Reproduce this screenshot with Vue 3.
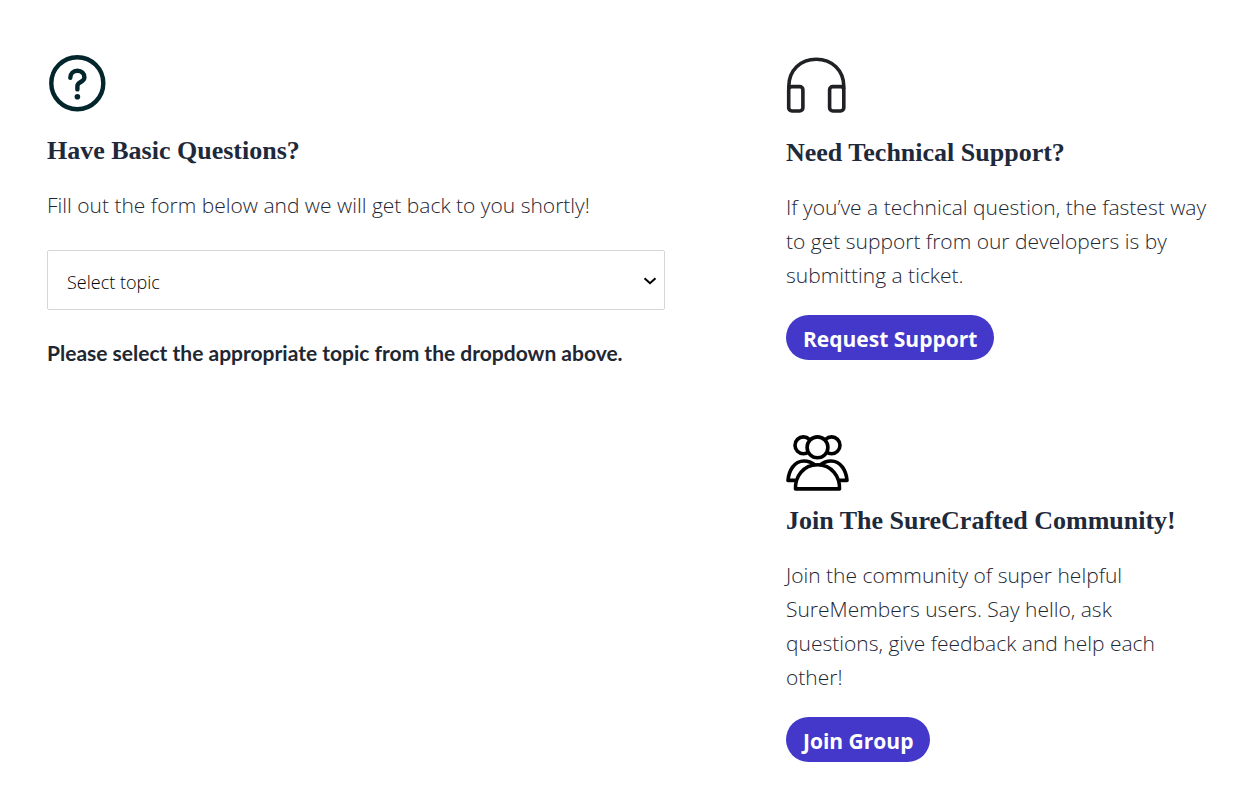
<script setup>
import { ref } from 'vue'

const topic = ref('')
const topics = ['Pre-sale question', 'Billing', 'Partnership', 'Other']
</script>

<template>
  <main class="contact">
    <section class="questions">
      <svg class="icon" width="60" height="60" viewBox="0 0 60 60" fill="none" stroke="#02262b" stroke-linecap="round" stroke-linejoin="round" aria-hidden="true">
        <circle cx="30.3" cy="30.2" r="26" stroke-width="4.4" />
        <path d="M23.3 24.8C23.3 20.6 26.1 17.8 30.4 17.8C34.7 17.8 37.4 20.6 37.4 24.5C37.4 29.4 30.4 28.6 30.4 33V36.4" stroke-width="4.4" />
        <circle cx="30.4" cy="43.7" r="2.8" fill="#02262b" stroke="none" />
      </svg>
      <h2>Have Basic Questions?</h2>
      <p>Fill out the form below and we will get back to you shortly!</p>
      <div class="field">
        <select v-model="topic" aria-label="Select topic">
          <option value="">Select topic</option>
          <option v-for="item in topics" :key="item" :value="item">{{ item }}</option>
        </select>
        <svg class="chevron" width="14" height="8" viewBox="0 0 14 8" fill="none" stroke="#000" stroke-width="2" aria-hidden="true">
          <path d="M1.5 1.2L7 6.2L12.5 1.2" />
        </svg>
      </div>
      <p class="hint">Please select the appropriate topic from the dropdown above.</p>
    </section>

    <div class="side">
      <section>
        <svg class="icon" width="60" height="60" viewBox="0 0 60 60" fill="none" stroke="#202124" stroke-width="3.6" aria-hidden="true">
          <path d="M2.8 34V31.5C2.8 15.2 14.5 4.2 30.2 4.2S57.8 15.2 57.8 31.5V34" />
          <rect x="2.7" y="31.6" width="14.2" height="24.4" rx="3.2" />
          <rect x="43.6" y="31.6" width="14.2" height="24.4" rx="3.2" />
        </svg>
        <h2>Need Technical Support?</h2>
        <p>If you’ve a technical question, the fastest way to get support from our developers is by submitting a ticket.</p>
        <a class="button" href="#support">Request Support</a>
      </section>

      <section>
        <svg class="icon group" width="64" height="60" viewBox="0 0 64 60" fill="none" stroke="#000" stroke-width="3.6" stroke-linejoin="round" aria-hidden="true">
          <circle cx="17.4" cy="12.3" r="8.4" />
          <circle cx="45.6" cy="12.3" r="8.4" />
          <path d="M9.5 47.4H2C2.8 38 8 28 18 28C22.5 28 26 29.6 29 32" />
          <path d="M53.5 47.4H61C60.2 38 55 28 45 28C40.5 28 37 29.6 34 32" />
          <circle cx="31.5" cy="14.3" r="10.4" fill="#fff" />
          <path d="M9.5 55.9C9 44 17 31.7 31.5 31.7S54 44 53.5 55.9Z" fill="#fff" />
        </svg>
        <h2>Join The SureCrafted Community!</h2>
        <p>Join the community of super helpful SureMembers users. Say hello, ask questions, give feedback and help each other!</p>
        <a class="button" href="#group">Join Group</a>
      </section>
    </div>
  </main>
</template>

<style>
body {
  margin: 0;
  background: #fff;
}
</style>

<style scoped>
.contact {
  display: grid;
  grid-template-columns: 618fr 426fr;
  column-gap: 121px;
  align-items: start;
  padding: 53px 29px 38px 47px;
  color: #1f2733;
  font-family: "Open Sans", "Noto Sans", sans-serif;
  font-size: 21px;
  line-height: 34px;
}

.icon {
  display: block;
  margin-bottom: 22px;
}

.icon.group {
  margin-bottom: 12px;
}

h2 {
  margin: 0 0 21px;
  color: #1e293b;
  font-family: "Liberation Serif", serif;
  font-size: 26px;
  font-weight: 700;
  line-height: 32px;
}

p {
  margin: 0;
  font-weight: 300;
}

.field {
  position: relative;
  margin: 28px 0 26px;
}

select {
  display: block;
  appearance: none;
  box-sizing: border-box;
  width: 100%;
  height: 60px;
  padding: 3px 40px 0 19px;
  border: 1px solid #d5d6d8;
  border-radius: 2px;
  background: #fff;
  color: #000;
  font-family: inherit;
  font-size: 18px;
  font-weight: 300;
}

.chevron {
  position: absolute;
  top: 27px;
  right: 8px;
  pointer-events: none;
}

.hint {
  font-family: Lato, "Open Sans", sans-serif;
  font-weight: 700;
}

.side {
  display: grid;
  gap: 73px;
  padding-top: 2px;
}

.button {
  display: inline-block;
  margin-top: 23px;
  padding: 3px 17px 0;
  border-radius: 23px;
  background: #4338ca;
  color: #fff;
  font-weight: 700;
  line-height: 42px;
  text-decoration: none;
  vertical-align: top;
}
</style>
